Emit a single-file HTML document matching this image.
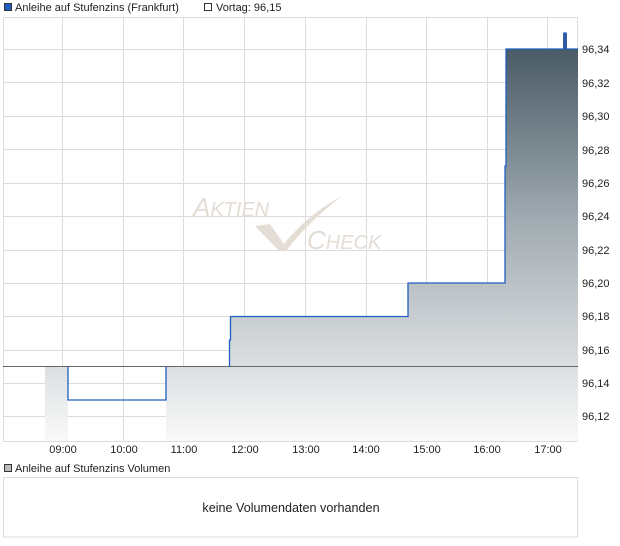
<!DOCTYPE html>
<html><head><meta charset="utf-8"><style>
html,body{margin:0;padding:0;background:#fff;width:620px;height:546px;overflow:hidden}
svg{display:block;font-family:"Liberation Sans",sans-serif}
</style></head><body>
<svg width="620" height="546" viewBox="0 0 620 546" xmlns="http://www.w3.org/2000/svg">
<defs>
<linearGradient id="g" x1="0" y1="49" x2="0" y2="441" gradientUnits="userSpaceOnUse">
<stop offset="0" stop-color="#4a5b67"/>
<stop offset="0.45" stop-color="#a3adb3"/>
<stop offset="1" stop-color="#f9f9f9"/>
</linearGradient>
</defs>
<rect x="4.5" y="3.5" width="7" height="7" fill="#1f5fbf" stroke="#333" stroke-width="1"/>
<text x="15" y="11" font-size="11" fill="#222">Anleihe auf Stufenzins (Frankfurt)</text>
<rect x="204.5" y="3.5" width="7" height="7" fill="#fff" stroke="#333" stroke-width="1"/>
<text x="216" y="11" font-size="11" fill="#222">Vortag: 96,15</text>
<g stroke="#dcdcdc" stroke-width="1">
<line x1="3" y1="17.5" x2="578" y2="17.5"/>
<line x1="3" y1="49.5" x2="578" y2="49.5"/>
<line x1="3" y1="82.5" x2="578" y2="82.5"/>
<line x1="3" y1="116.5" x2="578" y2="116.5"/>
<line x1="3" y1="149.5" x2="578" y2="149.5"/>
<line x1="3" y1="183.5" x2="578" y2="183.5"/>
<line x1="3" y1="216.5" x2="578" y2="216.5"/>
<line x1="3" y1="250.5" x2="578" y2="250.5"/>
<line x1="3" y1="283.5" x2="578" y2="283.5"/>
<line x1="3" y1="316.5" x2="578" y2="316.5"/>
<line x1="3" y1="350.5" x2="578" y2="350.5"/>
<line x1="3" y1="383.5" x2="578" y2="383.5"/>
<line x1="3" y1="416.5" x2="578" y2="416.5"/>
<line x1="3.5" y1="17" x2="3.5" y2="441"/>
<line x1="62.5" y1="17" x2="62.5" y2="441"/>
<line x1="123.5" y1="17" x2="123.5" y2="441"/>
<line x1="183.5" y1="17" x2="183.5" y2="441"/>
<line x1="244.5" y1="17" x2="244.5" y2="441"/>
<line x1="305.5" y1="17" x2="305.5" y2="441"/>
<line x1="366.5" y1="17" x2="366.5" y2="441"/>
<line x1="426.5" y1="17" x2="426.5" y2="441"/>
<line x1="487.5" y1="17" x2="487.5" y2="441"/>
<line x1="547.5" y1="17" x2="547.5" y2="441"/>
<line x1="577.5" y1="17" x2="577.5" y2="441"/>
<line x1="3" y1="441.5" x2="578" y2="441.5"/>
</g>
<g fill="#e4ddd6" font-style="italic">
<text x="193" y="216" font-size="26">A<tspan font-size="20">KTIEN</tspan></text>
<text x="307" y="249" font-size="26">C<tspan font-size="20">HECK</tspan></text>
<path d="M255 226 L270 224 L284 244 Q307 215 342 196 Q308 222 286 251 L279 251 Z"/>
</g>
<path fill="url(#g)" d="M45 367 H68 V441 H45 Z M166 367 H229 V340 H230 V316.5 H408 V283 H505 V166 H506 V49 H563 V33 H567 V49 H578 V441 H166 Z"/>
<line x1="3" y1="366.5" x2="578" y2="366.5" stroke="#666" stroke-width="1"/>
<path fill="none" stroke="#1f5fbf" stroke-width="1.3" d="M68 367 V400 H166 V367 M229.5 367 V340 H230.5 V316.5 H408 V283 H505 V166 H506 V49 H564 V33 H566 V49 H578"/>
<g font-size="11" fill="#222">
<text x="582" y="53">96,34</text>
<text x="582" y="87">96,32</text>
<text x="582" y="120">96,30</text>
<text x="582" y="154">96,28</text>
<text x="582" y="187">96,26</text>
<text x="582" y="220">96,24</text>
<text x="582" y="254">96,22</text>
<text x="582" y="287">96,20</text>
<text x="582" y="320">96,18</text>
<text x="582" y="354">96,16</text>
<text x="582" y="387">96,14</text>
<text x="582" y="420">96,12</text>
</g>
<g font-size="11" fill="#222" text-anchor="middle">
<text x="63" y="453">09:00</text>
<text x="124" y="453">10:00</text>
<text x="184" y="453">11:00</text>
<text x="245" y="453">12:00</text>
<text x="306" y="453">13:00</text>
<text x="366" y="453">14:00</text>
<text x="427" y="453">15:00</text>
<text x="487" y="453">16:00</text>
<text x="548" y="453">17:00</text>
</g>
<rect x="4.5" y="464.5" width="7" height="7" fill="#bbb" stroke="#333" stroke-width="1"/>
<text x="15" y="472" font-size="11" fill="#222">Anleihe auf Stufenzins Volumen</text>
<rect x="3.5" y="477.5" width="574" height="59.5" fill="#fff" stroke="#dcdcdc" stroke-width="1"/>
<text x="291" y="512" font-size="12.6" fill="#222" text-anchor="middle">keine Volumendaten vorhanden</text>
</svg>
</body></html>
